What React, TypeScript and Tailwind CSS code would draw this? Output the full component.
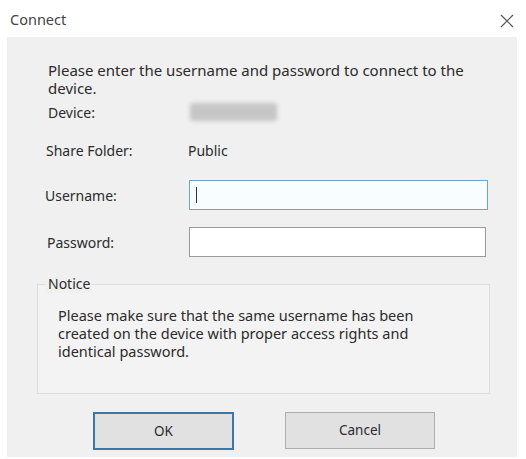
export default function App() {
  return (
    <div
      className="w-[526px] h-[459px] bg-white flex flex-col text-[#2b2b2b] overflow-hidden"
      style={{ fontFamily: '"Noto Sans", "Open Sans", sans-serif' }}
    >
      <div className="h-[37px] flex items-center justify-between pl-[10px] pr-[12px] pt-[3px] shrink-0">
        <span className="text-[14.5px] text-[#444]">Connect</span>
        <svg width="14" height="14" viewBox="0 0 14 14" className="mt-[2px]">
          <path d="M1 1 L13 13 M13 1 L1 13" stroke="#555" strokeWidth="1.2" />
        </svg>
      </div>

      <div className="flex-1 ml-[7px] mr-[9px] mb-[2px] bg-[#f0f0f0] pt-[24px] text-[14px]">
        <p className="pl-[41px] leading-[18px] w-[480px] text-[15px]">
          Please enter the username and password to connect to the device.
        </p>
        <div className="flex items-center mt-[5px] h-[20px]">
          <span className="pl-[41px] w-[183px]">Device:</span>
          <div className="w-[87px] h-[18px] bg-[#c6c6c6] blur-[2px] rounded-[2px]" />
        </div>

        <div className="flex items-center mt-[19px] h-[18px]">
          <span className="pl-[39px] w-[181px]">Share Folder:</span>
          <span>Public</span>
        </div>

        <div className="flex items-center mt-[21px]">
          <span className="pl-[38px] w-[182px]">Username:</span>
          <div className="w-[299px] h-[30px] border border-[#6aa7c9] bg-[#f8fdff] flex items-center pl-[6px]">
            <div className="w-px h-[16px] bg-[#333]" />
          </div>
        </div>

        <div className="flex items-center mt-[17px]">
          <span className="pl-[40px] w-[182px]">Password:</span>
          <div className="w-[297px] h-[30px] border border-[#9a9a9a] bg-white" />
        </div>

        <div className="relative ml-[30px] mt-[27px] w-[453px] h-[110px] border border-[#dcdcdc] bg-[#f3f3f3]">
          <span className="absolute left-[8px] -top-[10px] px-[2px] bg-[#f0f0f0] leading-[18px]">
            Notice
          </span>
          <p className="pl-[20px] pt-[21px] leading-[18px] w-[410px] text-[14.5px]">
            Please make sure that the same username has been created on the device with proper access rights and
            identical password.
          </p>
        </div>

        <div className="flex mt-[18px] ml-[86px] gap-[51px]">
          <button className="w-[141px] h-[38px] border-2 border-[#3b78a8] bg-[#e1e1e1] text-[13.5px]">
            OK
          </button>
          <button className="w-[150px] h-[37px] border border-[#adadad] bg-[#e1e1e1] text-[13.5px]">
            Cancel
          </button>
        </div>
      </div>
    </div>
  );
}
